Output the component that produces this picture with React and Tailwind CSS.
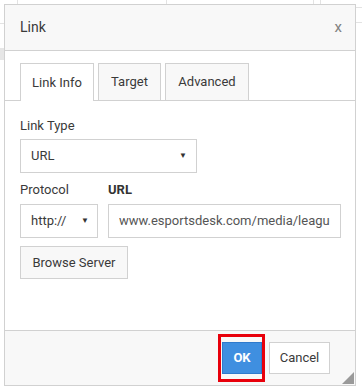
import React from "react";

function FakeSelect({ value, width, arrowRight }) {
  return (
    <div
      className={`flex items-center justify-between h-[34px] border border-[#d1d1d1] bg-white pl-[10px] ${width} ${arrowRight}`}
    >
      <span className="text-[13px] text-[#3a3a3a]">{value}</span>
      <span className="text-[8px] text-[#333]">▼</span>
    </div>
  );
}

export default function App() {
  return (
    <div
      className="relative h-[390px] w-[362px] overflow-hidden bg-white"
      style={{ fontFamily: "Roboto, 'Liberation Sans', sans-serif" }}
    >
      {/* page behind the dialog */}
      <div className="absolute left-[17px] top-0 h-[5px] w-px bg-[#e3e3e3]" />
      <div className="absolute left-[166px] top-0 h-[5px] w-px bg-[#e3e3e3]" />
      <div className="absolute left-[313px] top-0 h-[5px] w-px bg-[#e3e3e3]" />
      <div className="absolute left-[320px] top-0 h-[5px] w-px bg-[#e3e3e3]" />
      <div className="absolute left-0 top-[23px] h-px w-[5px] bg-[#e3e3e3]" />
      <div className="absolute left-0 top-[48px] h-[12px] w-[4px] bg-[#e6e6e6]" />
      <div className="absolute right-0 top-[7px] h-[16px] w-[7px] border-y border-[#e3e3e3]" />

      {/* dialog */}
      <div className="relative ml-[4px] mt-[4px] flex h-[382px] w-[352px] flex-col border border-[#d1d1d1] bg-white">
        <div className="flex h-[46px] shrink-0 items-center justify-between border-b border-[#d1d1d1] bg-[#f8f8f8] pl-[15px] pr-[13px]">
          <span className="text-[14px] text-[#3a3a3a]">Link</span>
          <span className="text-[15px] text-[#808080]">x</span>
        </div>

        <div className="flex flex-1 flex-col">
          <div className="mt-[12px] flex h-[38px] items-end gap-[4px] border-b border-[#d1d1d1] pl-[15px]">
            <div className="-mb-px flex h-[38px] w-[74px] items-center justify-center border border-b-0 border-[#d1d1d1] bg-white text-[13px] text-[#3a3a3a]">
              Link Info
            </div>
            <div className="flex h-[37px] w-[63px] items-center justify-center border border-b-0 border-[#d1d1d1] bg-[#f8f8f8] text-[13px] text-[#3a3a3a]">
              Target
            </div>
            <div className="flex h-[37px] w-[84px] items-center justify-center border border-b-0 border-[#d1d1d1] bg-[#f8f8f8] text-[13px] text-[#3a3a3a]">
              Advanced
            </div>
          </div>

          <div className="flex flex-col pl-[15px]">
            <span className="mt-[16px] text-[13px] leading-[17px] text-[#3a3a3a]">Link Type</span>
            <div className="mt-[5px]">
              <FakeSelect value="URL" width="w-[177px]" arrowRight="pr-[9px]" />
            </div>

            <div className="mt-[8px] flex gap-[10px]">
              <div className="flex flex-col">
                <span className="text-[13px] leading-[17px] text-[#3a3a3a]">Protocol</span>
                <div className="mt-[6px]">
                  <FakeSelect value="http://" width="w-[78px]" arrowRight="pr-[8px]" />
                </div>
              </div>
              <div className="flex flex-col">
                <span className="text-[13px] font-bold leading-[17px] text-[#333]">URL</span>
                <div className="mt-[6px] flex h-[34px] w-[233px] items-center border border-[#d1d1d1] bg-white px-[10px]">
                  <div className="min-w-0 flex-1 overflow-hidden whitespace-nowrap text-[13px] text-[#555]">
                    www.esportsdesk.com/media/league
                  </div>
                </div>
              </div>
            </div>

            <button className="mt-[8px] flex h-[33px] w-[108px] items-center justify-center border border-[#d1d1d1] bg-[#f8f8f8] text-[13px] text-[#3a3a3a]">
              Browse Server
            </button>
          </div>
        </div>

        <div className="relative flex h-[55px] shrink-0 items-start justify-end gap-[7px] border-t border-[#d1d1d1] bg-[#f8f8f8] pr-[25px] pt-[11px]">
          <div className="relative">
            <button className="flex h-[32px] w-[40px] items-center justify-center border border-[#2f7acc] bg-[#3f8fe0] text-[13px] font-bold text-white">
              OK
            </button>
            <div className="pointer-events-none absolute -left-[4px] -right-[3px] -top-[8px] -bottom-[8px] border-[3px] border-[#e8000b]" />
          </div>
          <button className="flex h-[32px] w-[61px] items-center justify-center border border-[#d1d1d1] bg-white text-[13px] text-[#3a3a3a]">
            Cancel
          </button>
          <svg className="absolute bottom-[1px] right-[1px]" width="12" height="12" viewBox="0 0 12 12">
            <polygon points="12,0 12,12 0,12" fill="#9a9a9a" />
          </svg>
        </div>
      </div>
    </div>
  );
}
